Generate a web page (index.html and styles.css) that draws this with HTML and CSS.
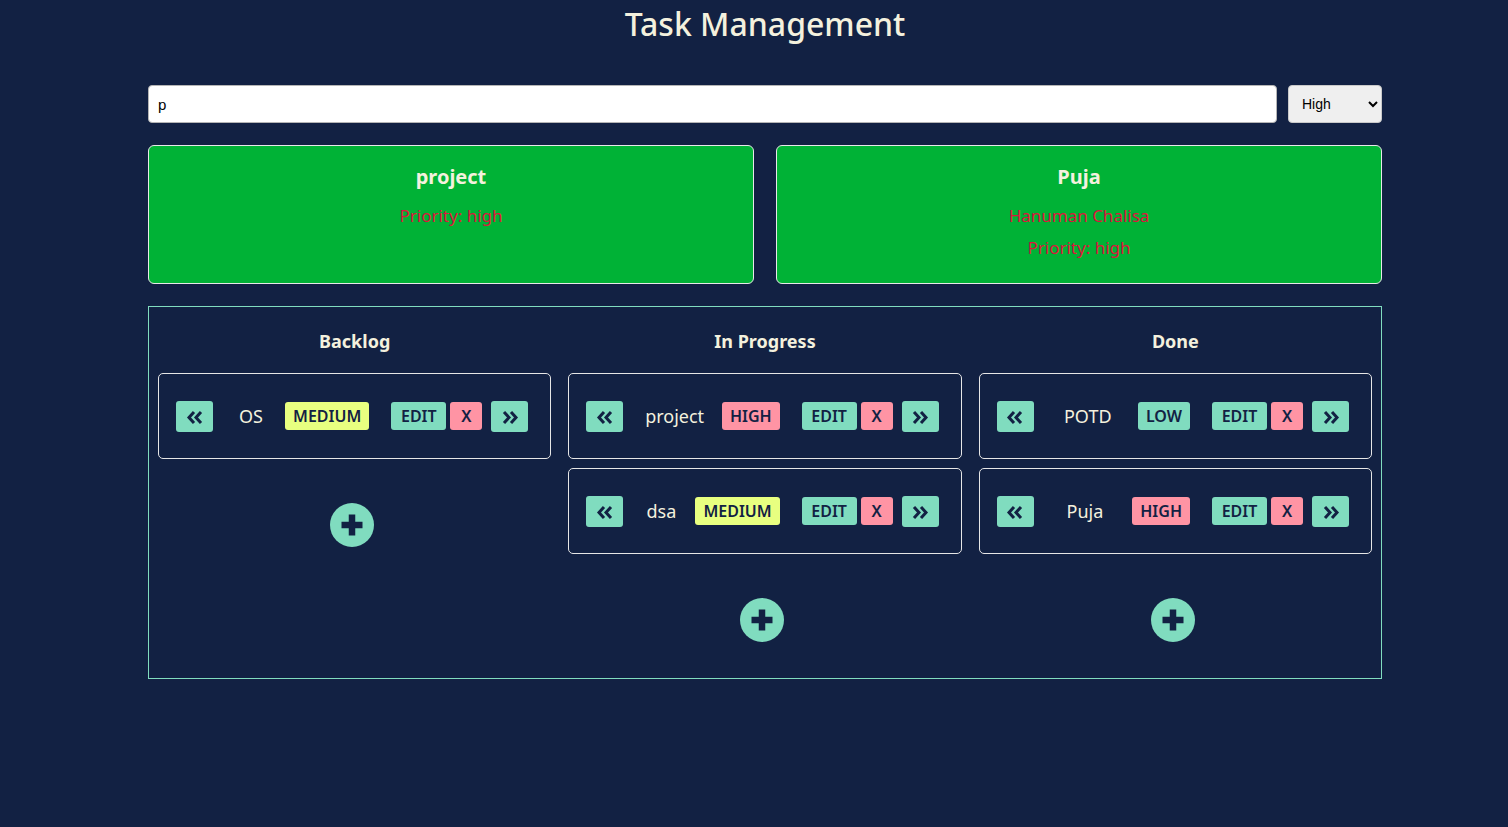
FILE: index.html
```html
<!DOCTYPE html>
<html lang="en">
<head>
<meta charset="utf-8">
<title>Task Management</title>
<link rel="stylesheet" href="styles.css">
</head>
<body>
<div class="app">
  <h1 class="title">Task Management</h1>

  <div class="filters">
    <input class="search" type="text" value="p">
    <select class="priority-select">
      <option>High</option>
      <option>Medium</option>
      <option>Low</option>
    </select>
  </div>

  <div class="results">
    <div class="result-card">
      <h3 class="result-title">project</h3>
      <p class="result-text">Priority: high</p>
    </div>
    <div class="result-card">
      <h3 class="result-title">Puja</h3>
      <p class="result-text">Hanuman Chalisa</p>
      <p class="result-text">Priority: high</p>
    </div>
  </div>

  <div class="board">
    <div class="column">
      <h2 class="column-title">Backlog</h2>
      <div class="task">
        <button class="btn nav"><svg viewBox="0 0 18 14" width="18" height="14"><path d="M8 2L3 7.5L8 13M15 2L10 7.5L15 13" fill="none" stroke="#122143" stroke-width="3"/></svg></button>
        <span class="task-name">OS</span>
        <span class="badge medium">MEDIUM</span>
        <div class="actions">
          <button class="btn edit">EDIT</button>
          <button class="btn del">X</button>
        </div>
        <button class="btn nav"><svg viewBox="0 0 18 14" width="18" height="14"><path d="M3 2L8 7.5L3 13M10 2L15 7.5L10 13" fill="none" stroke="#122143" stroke-width="3"/></svg></button>
      </div>
      <div class="add-wrap"><button class="add"><svg viewBox="0 0 44 44" width="44" height="44"><path d="M22 11.5V32.5M11.5 22H32.5" stroke="#122143" stroke-width="6.5"/></svg></button></div>
    </div>

    <div class="column">
      <h2 class="column-title">In Progress</h2>
      <div class="task">
        <button class="btn nav"><svg viewBox="0 0 18 14" width="18" height="14"><path d="M8 2L3 7.5L8 13M15 2L10 7.5L15 13" fill="none" stroke="#122143" stroke-width="3"/></svg></button>
        <span class="task-name">project</span>
        <span class="badge high">HIGH</span>
        <div class="actions">
          <button class="btn edit">EDIT</button>
          <button class="btn del">X</button>
        </div>
        <button class="btn nav"><svg viewBox="0 0 18 14" width="18" height="14"><path d="M3 2L8 7.5L3 13M10 2L15 7.5L10 13" fill="none" stroke="#122143" stroke-width="3"/></svg></button>
      </div>
      <div class="task">
        <button class="btn nav"><svg viewBox="0 0 18 14" width="18" height="14"><path d="M8 2L3 7.5L8 13M15 2L10 7.5L15 13" fill="none" stroke="#122143" stroke-width="3"/></svg></button>
        <span class="task-name">dsa</span>
        <span class="badge medium">MEDIUM</span>
        <div class="actions">
          <button class="btn edit">EDIT</button>
          <button class="btn del">X</button>
        </div>
        <button class="btn nav"><svg viewBox="0 0 18 14" width="18" height="14"><path d="M3 2L8 7.5L3 13M10 2L15 7.5L10 13" fill="none" stroke="#122143" stroke-width="3"/></svg></button>
      </div>
      <div class="add-wrap"><button class="add"><svg viewBox="0 0 44 44" width="44" height="44"><path d="M22 11.5V32.5M11.5 22H32.5" stroke="#122143" stroke-width="6.5"/></svg></button></div>
    </div>

    <div class="column">
      <h2 class="column-title">Done</h2>
      <div class="task">
        <button class="btn nav"><svg viewBox="0 0 18 14" width="18" height="14"><path d="M8 2L3 7.5L8 13M15 2L10 7.5L15 13" fill="none" stroke="#122143" stroke-width="3"/></svg></button>
        <span class="task-name">POTD</span>
        <span class="badge low">LOW</span>
        <div class="actions">
          <button class="btn edit">EDIT</button>
          <button class="btn del">X</button>
        </div>
        <button class="btn nav"><svg viewBox="0 0 18 14" width="18" height="14"><path d="M3 2L8 7.5L3 13M10 2L15 7.5L10 13" fill="none" stroke="#122143" stroke-width="3"/></svg></button>
      </div>
      <div class="task">
        <button class="btn nav"><svg viewBox="0 0 18 14" width="18" height="14"><path d="M8 2L3 7.5L8 13M15 2L10 7.5L15 13" fill="none" stroke="#122143" stroke-width="3"/></svg></button>
        <span class="task-name">Puja</span>
        <span class="badge high">HIGH</span>
        <div class="actions">
          <button class="btn edit">EDIT</button>
          <button class="btn del">X</button>
        </div>
        <button class="btn nav"><svg viewBox="0 0 18 14" width="18" height="14"><path d="M3 2L8 7.5L3 13M10 2L15 7.5L10 13" fill="none" stroke="#122143" stroke-width="3"/></svg></button>
      </div>
      <div class="add-wrap"><button class="add"><svg viewBox="0 0 44 44" width="44" height="44"><path d="M22 11.5V32.5M11.5 22H32.5" stroke="#122143" stroke-width="6.5"/></svg></button></div>
    </div>
  </div>
</div>
</body>
</html>
```

FILE: styles.css
```css
* { box-sizing: border-box; }

html, body {
  margin: 0;
  background: #122143;
}

body {
  padding-left: 22px;
  font-family: "Noto Sans", "Open Sans", sans-serif;
  color: #f4f1de;
  min-height: 827px;
}

.app {
  width: 1234px;
  margin: 0 auto;
}

.title {
  margin: 0;
  padding-top: 4px;
  height: 85px;
  font-size: 32px;
  line-height: 40px;
  font-weight: 500;
  text-align: center;
  color: #f4f1de;
}

.filters {
  display: flex;
  gap: 11px;
  height: 38px;
}

.search {
  flex: 1;
  height: 38px;
  border: 1px solid #b5b5b5;
  border-radius: 4px;
  padding: 0 9px;
  font-family: "Liberation Sans", Arial, sans-serif;
  font-size: 15px;
  color: #000;
  background: #fff;
}

.priority-select {
  width: 94px;
  height: 38px;
  border: 1px solid #c9c9c9;
  border-radius: 4px;
  padding: 0 9px;
  background: #efefef;
  font-family: "Liberation Sans", Arial, sans-serif;
  font-size: 14px;
  color: #000;
}

.results {
  margin-top: 22px;
  display: grid;
  grid-template-columns: 1fr 1fr;
  gap: 22px;
}

.result-card {
  background: #00b236;
  border: 1px solid #e8e8e8;
  border-radius: 6px;
  padding: 19px 20px 23px;
  text-align: center;
  min-height: 139px;
}

.result-title {
  margin: 0 0 15px;
  font-size: 20px;
  line-height: 24px;
  font-weight: 700;
  color: #f4f1de;
}

.result-text {
  margin: 0 0 8px;
  font-size: 17px;
  line-height: 24px;
  color: #dc143c;
}

.result-text:last-child { margin-bottom: 0; }

.board {
  margin-top: 22px;
  border: 1px solid #80dcbf;
  padding: 10px 9px 36px;
  display: grid;
  grid-template-columns: repeat(3, 1fr);
  gap: 17px;
  align-items: start;
}

.column-title {
  margin: 12px 0 20px;
  font-size: 18px;
  line-height: 24px;
  font-weight: 700;
  text-align: center;
  color: #f4f1de;
}

.task {
  display: flex;
  align-items: center;
  height: 86px;
  border: 1px solid #e6e6e6;
  border-radius: 5px;
  padding: 0 22px 0 17px;
  margin-bottom: 9px;
}

.btn {
  border: none;
  font-family: inherit;
  font-weight: 600;
  font-size: 16px;
  color: #122143;
  border-radius: 3px;
  padding: 0;
  cursor: pointer;
}

.nav {
  width: 37px;
  height: 31px;
  background: #80dcbf;
  display: flex;
  align-items: center;
  justify-content: center;
  padding-top: 2px;
}

.task-name {
  flex: 1;
  padding-left: 4px;
  text-align: center;
  font-size: 18px;
  line-height: 24px;
  color: #f4f1de;
  white-space: nowrap;
}

.badge {
  height: 28px;
  line-height: 28px;
  padding: 0 8px;
  border-radius: 3px;
  font-weight: 600;
  font-size: 16px;
  color: #122143;
  margin-right: 22px;
}

.badge.medium { background: #e8ff80; }
.badge.high { background: #ff94a4; }
.badge.low { background: #80dcbf; }

.actions {
  display: flex;
  gap: 4px;
  margin-right: 9px;
}

.edit {
  height: 28px;
  width: 55px;
  background: #80dcbf;
}

.del {
  height: 28px;
  width: 32px;
  background: #ff94a4;
}

.add-wrap {
  display: flex;
  justify-content: center;
  padding-right: 5px;
  margin-top: 44px;
}

.add {
  width: 44px;
  height: 44px;
  border: none;
  border-radius: 50%;
  background: #80dcbf;
  padding: 0;
  display: block;
  cursor: pointer;
}

.add svg { display: block; }
```
